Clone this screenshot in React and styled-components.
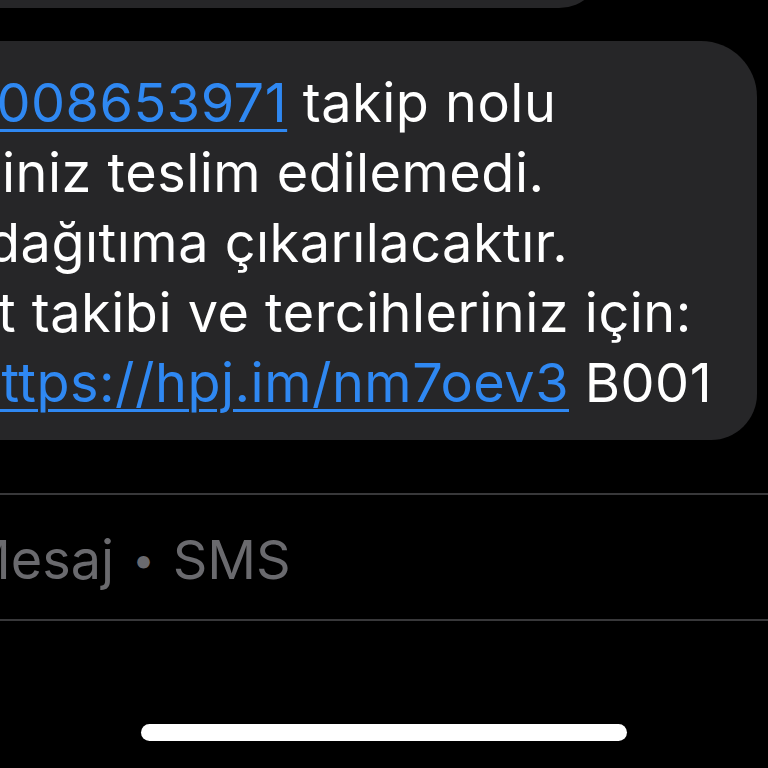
import React from "react";
import styled, { createGlobalStyle } from "styled-components";

const GlobalStyle = createGlobalStyle`
  html, body {
    margin: 0;
    padding: 0;
    background: #000;
    overflow: hidden;
  }
  body {
    font-family: Inter, "Noto Sans", "Liberation Sans", sans-serif;
    -webkit-font-smoothing: antialiased;
  }
`;

const Screen = styled.div`
  width: 768px;
  height: 768px;
  background: #000;
  overflow: hidden;
  display: flex;
  flex-direction: column;
`;

const PrevBubble = styled.div`
  height: 60px;
  margin-top: -52px;
  margin-left: -60px;
  width: 663px;
  background: #262628;
  border-radius: 0 0 44px 44px;
`;

const Bubble = styled.div`
  margin: 33px 11px 0 -60px;
  padding: 27px 0 22px 60px;
  background: #262628;
  border-radius: 0 56px 46px 0;
  color: #fff;
  font-size: 54px;
  line-height: 70px;
  letter-spacing: 0.5px;
`;

const Line = styled.div`
  white-space: nowrap;
  margin-left: ${(p) => p.$shift || 0}px;
`;

const Link = styled.span`
  color: #2f88f2;
  text-decoration: underline;
  text-decoration-thickness: 3px;
  text-underline-offset: 7px;
`;

const Divider = styled.div`
  height: 2px;
  background: #38383a;
`;

const Footer = styled.div`
  margin-top: 53px;
  display: flex;
  flex-direction: column;
`;

const Caption = styled.div`
  height: 124px;
  box-sizing: border-box;
  padding-top: 4px;
  display: flex;
  align-items: center;
  margin-left: -38px;
  color: #6a6a6e;
  font-size: 54px;
  white-space: nowrap;
`;

const Dot = styled.span`
  margin: 0 18px;
  font-size: 40px;
`;

const HomeBar = styled.div`
  align-self: center;
  width: 486px;
  height: 17px;
  margin-top: 103px;
  border-radius: 9px;
  background: #fff;
`;

export default function App() {
  return (
    <Screen>
      <GlobalStyle />
      <PrevBubble />
      <Bubble>
        <Line $shift={-26}>
          <Link>1008653971</Link> takip nolu
        </Line>
        <Line $shift={2}>iniz teslim edilemedi.</Line>
        <Line $shift={-13}>dağıtıma çıkarılacaktır.</Line>
        <Line $shift={-2}>t takibi ve tercihleriniz için:</Line>
        <Line $shift={-31}>
          <Link>https://hpj.im/nm7oev3</Link> B001
        </Line>
      </Bubble>
      <Footer>
        <Divider />
        <Caption>
          Mesaj<Dot>•</Dot>SMS
        </Caption>
        <Divider />
        <HomeBar />
      </Footer>
    </Screen>
  );
}
